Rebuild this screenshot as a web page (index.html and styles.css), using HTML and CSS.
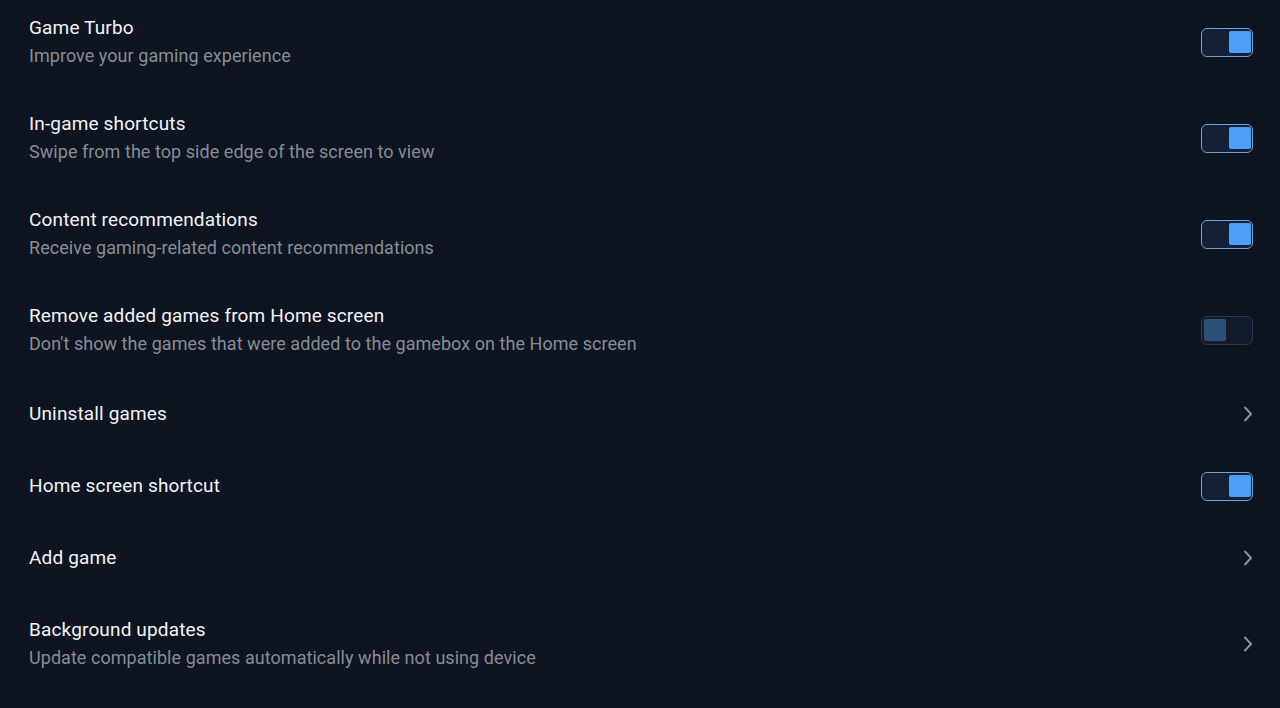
FILE: index.html
```html
<!DOCTYPE html>
<html>
<head>
<meta charset="utf-8">
<link rel="stylesheet" href="styles.css">
</head>
<body>
<div class="list">
  <div class="row two">
    <div class="text"><div class="title">Game Turbo</div><div class="sub">Improve your gaming experience</div></div>
    <div class="toggle on"><div class="knob"></div></div>
  </div>
  <div class="row two">
    <div class="text"><div class="title">In-game shortcuts</div><div class="sub">Swipe from the top side edge of the screen to view</div></div>
    <div class="toggle on"><div class="knob"></div></div>
  </div>
  <div class="row two">
    <div class="text"><div class="title">Content recommendations</div><div class="sub">Receive gaming-related content recommendations</div></div>
    <div class="toggle on"><div class="knob"></div></div>
  </div>
  <div class="row two">
    <div class="text"><div class="title">Remove added games from Home screen</div><div class="sub">Don't show the games that were added to the gamebox on the Home screen</div></div>
    <div class="toggle off"><div class="knob"></div></div>
  </div>
  <div class="row one">
    <div class="text"><div class="title">Uninstall games</div></div>
    <svg class="chev" width="12" height="18" viewBox="0 0 12 18"><path d="M3 2.5 L9 9 L3 15.5" fill="none" stroke="#8b9099" stroke-width="2" stroke-linecap="round" stroke-linejoin="round"/></svg>
  </div>
  <div class="row one">
    <div class="text"><div class="title">Home screen shortcut</div></div>
    <div class="toggle on"><div class="knob"></div></div>
  </div>
  <div class="row one">
    <div class="text"><div class="title">Add game</div></div>
    <svg class="chev" width="12" height="18" viewBox="0 0 12 18"><path d="M3 2.5 L9 9 L3 15.5" fill="none" stroke="#8b9099" stroke-width="2" stroke-linecap="round" stroke-linejoin="round"/></svg>
  </div>
  <div class="row two last">
    <div class="text"><div class="title">Background updates</div><div class="sub">Update compatible games automatically while not using device</div></div>
    <svg class="chev" width="12" height="18" viewBox="0 0 12 18"><path d="M3 2.5 L9 9 L3 15.5" fill="none" stroke="#8b9099" stroke-width="2" stroke-linecap="round" stroke-linejoin="round"/></svg>
  </div>
</div>
</body>
</html>
```

FILE: styles.css
```css
html, body {
  margin: 0;
  padding: 0;
  background: #0e1420;
  height: 100%;
  overflow: hidden;
}
body {
  font-family: Roboto, "Noto Sans", sans-serif;
}
.list {
  margin-top: -6px;
  padding: 0 27px 0 29px;
}
.row {
  display: flex;
  align-items: center;
  justify-content: space-between;
}
.row.two { height: 96px; }
.row.one { height: 72px; }
.row.last { margin-top: 2px; }
.text {
  display: flex;
  flex-direction: column;
}
.title {
  color: #f2f4f7;
  font-size: 19px;
  line-height: 28px;
  letter-spacing: 0.15px;
}
.sub {
  color: #868c96;
  font-size: 18px;
  line-height: 28px;
  letter-spacing: 0.05px;
}
.toggle {
  width: 52px;
  height: 29px;
  border-radius: 6px;
  box-sizing: border-box;
  display: flex;
  align-items: center;
  padding: 0 1.5px;
}
.toggle.on {
  border: 1.5px solid #6aa2de;
  background: #142033;
  justify-content: flex-end;
}
.toggle.off {
  border: 1.5px solid #28394f;
  background: #131c2a;
  justify-content: flex-start;
}
.knob {
  width: 22px;
  height: 22px;
  border-radius: 2px;
}
.on .knob { background: #4c9ef7; }
.off .knob { background: #2d5078; }
.chev { margin-right: -1px; }
```
